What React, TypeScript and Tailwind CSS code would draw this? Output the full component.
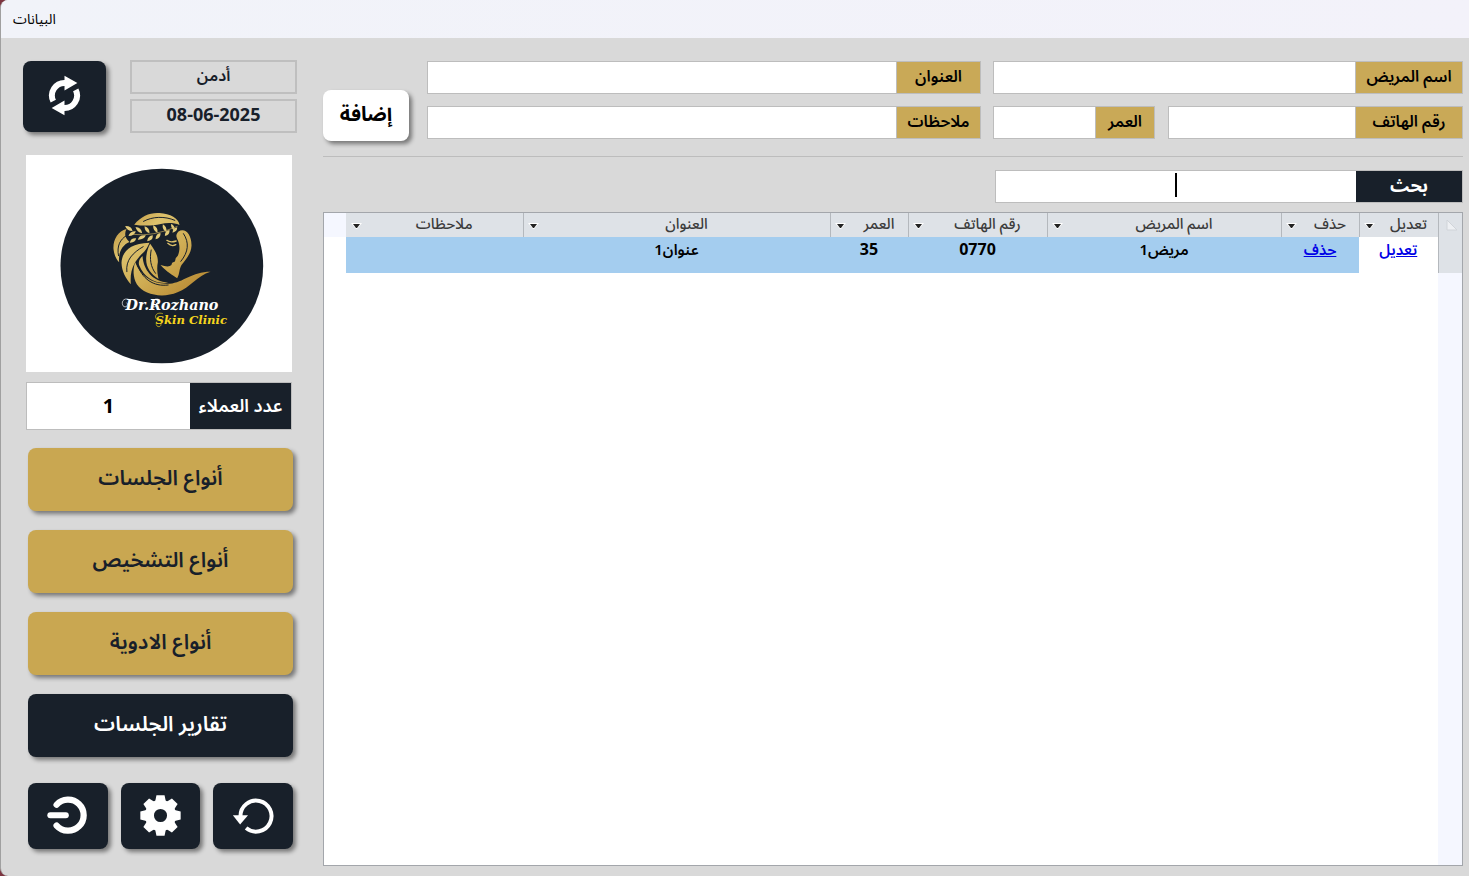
import type { ReactNode } from "react";
import clsx from "clsx";

type Column = {
  id: string;
  label: string;
  width: string;
};

const columns: Column[] = [
  { id: "edit", label: "تعديل", width: "w-[79px]" },
  { id: "delete", label: "حذف", width: "w-[78px]" },
  { id: "name", label: "اسم المريض", width: "w-[234px]" },
  { id: "phone", label: "رقم الهاتف", width: "w-[139px]" },
  { id: "age", label: "العمر", width: "w-[78px]" },
  { id: "address", label: "العنوان", width: "" },
  { id: "notes", label: "ملاحظات", width: "w-[177px]" },
];

const patients = [
  { id: 1, name: "مريض1", phone: "0770", age: "35", address: "عنوان1", notes: "" },
];

const menu = [
  { label: "أنواع الجلسات", dark: false },
  { label: "أنواع التشخيص", dark: false },
  { label: "أنواع الادوية", dark: false },
  { label: "تقارير الجلسات", dark: true },
];

function SyncIcon() {
  return (
    <svg viewBox="140 224 100 128" className="h-[43px] w-[33px]">
      <g fill="none" stroke="#fff" strokeWidth="18">
        <path d="M156 305A38 38 0 0 1 192 250" />
        <path d="M224 271A38 38 0 0 1 188 326" />
      </g>
      <path fill="#fff" d="M190 228L229 250L190 273ZM190 348L151 326L190 303Z" />
    </svg>
  );
}

function ExitIcon() {
  return (
    <svg viewBox="140 585 124 120" className="h-10 w-[41px]">
      <g fill="none" stroke="#fff" strokeLinecap="round">
        <path strokeWidth="19" d="M169 614A47 47 0 1 1 169 677" />
        <path strokeWidth="18" d="M150 646H197" />
      </g>
    </svg>
  );
}

function GearIcon() {
  return (
    <svg viewBox="-61 -61 122 122" className="size-[41px]">
      <circle r="33" fill="none" stroke="#fff" strokeWidth="27" />
      {[0, 45, 90, 135, 180, 225, 270, 315].map((deg) => (
        <path key={deg} fill="#fff" d="M-16 -42L-12 -60H12L16 -42Z" transform={`rotate(${deg})`} />
      ))}
    </svg>
  );
}

function UndoIcon() {
  return (
    <svg viewBox="694 590 126 112" className="h-[37px] w-[42px]">
      <path fill="none" stroke="#fff" strokeWidth="12" d="M736 684A47 47 0 1 0 719 648" />
      <path fill="#fff" d="M696 645H742L718 673Z" />
    </svg>
  );
}

function ClinicLogo() {
  return (
    <svg viewBox="-69 0 795 651" direction="ltr" className="block h-[217px] w-full bg-white" role="img" aria-label="Dr.Rozhano Skin Clinic">
      <defs>
        <linearGradient id="gold" gradientUnits="userSpaceOnUse" x1="200" y1="180" x2="420" y2="420">
          <stop offset="0" stopColor="#b98d38" />
          <stop offset="0.3" stopColor="#dcc16c" />
          <stop offset="0.6" stopColor="#d0ae55" />
          <stop offset="1" stopColor="#b98c35" />
        </linearGradient>
      </defs>
      <ellipse cx="337" cy="333" rx="304" ry="292" fill="#18202a" />
      {/* hair */}
      <g fill="url(#gold)">
        <path d="M254 209C276 182 302 172 330 174C362 176 388 190 390 210C374 203 352 203 334 207C306 213 282 213 254 209Z" />
        <path d="M231 222C205 229 190 254 192 283C194 301 201 314 209 322C206 295 216 271 240 261C226 249 224 236 231 222Z" />
        <path d="M216 323C218 291 239 265 300 263C294 277 288 288 276 298C258 318 240 340 244 388C228 369 217 349 216 323Z" />
        <path d="M386 230C405 216 427 236 426 272C425 296 409 313 396 330C388 344 391 356 383 370C369 360 352 351 333 330C345 333 353 336 361 333C369 331 365 324 371 322C379 321 377 313 379 309L385 302C392 285 391 270 385 256C380 246 378 240 386 230Z" />
        <path d="M302 266C314 284 326 299 325 322C322 338 323 352 327 372C303 356 289 337 290 309C291 292 296 277 302 266Z" />
        <path d="M257 322C274 366 312 390 361 386C402 382 427 350 483 350C443 362 422 397 384 412C339 431 283 420 262 388C250 366 250 342 257 322Z" />
        <path d="M279 303C282 346 310 379 356 383C318 388 284 369 269 331C266 319 271 310 279 303Z" />
      </g>
      <g fill="none" stroke="#18202a" strokeWidth="3" strokeLinecap="round">
        <path d="M282 199C310 184 345 183 376 196" />
        <path d="M207 302C201 272 213 253 229 243" />
        <path d="M232 350C228 315 250 293 281 275" />
        <path d="M262 325C277 372 312 396 356 390" />
        <path d="M305 285C300 312 303 335 318 355" />
        <path d="M402 236C420 263 417 291 394 319" />
      </g>
      {/* olive wreath */}
      <g fill="#e3cb79">
        <path d="M227 213Q246 212 249 228Q232 228 227 213ZM237 243Q241 228 259 229Q255 243 237 243ZM241 263Q244 248 260 250Q257 264 241 263Z" />
        <path d="M258 216Q276 217 278 235Q262 232 258 216ZM265 254Q270 238 289 241Q283 255 265 254ZM285 214Q301 219 300 235Q285 230 285 214Z" />
        <path d="M293 259Q295 242 310 241Q311 257 293 259ZM311 211Q327 218 324 234Q310 227 311 211ZM318 253Q319 235 333 234Q335 249 318 253Z" />
        <path d="M340 208Q354 216 350 231Q337 223 340 208ZM346 243Q346 227 360 225Q362 240 346 243ZM365 206Q378 212 374 226Q363 219 365 206ZM369 233Q370 220 383 217Q384 230 369 233Z" />
      </g>
      <path d="M250 238Q310 246 384 214" fill="none" stroke="#cdb061" strokeWidth="2" />
      <path d="M352 256Q363 264 380 258M355 265Q366 276 379 269" fill="none" stroke="#dcc06a" strokeWidth="4" strokeLinecap="round" />
      <g fill="none" strokeWidth="2">
        <path stroke="#fff" d="M240 434C221 426 213 443 222 454C231 460 238 448 231 443M330 434C311 426 302 446 310 455C320 459 326 447 318 442" />
        <path stroke="#f5d51d" d="M340 476C318 469 312 488 325 495M320 508C323 520 337 515 334 506" />
      </g>
      <text x="228" y="466" fill="#fff" fontSize="43" className="font-['DejaVu_Serif',serif] font-bold italic">
        Dr.Rozhano
      </text>
      <text x="318" y="506" fill="#f5d51d" fontSize="35" className="font-['DejaVu_Serif',serif] font-bold italic">
        Skin Clinic
      </text>
    </svg>
  );
}

function IconButton({ label, className, children }: { label: string; className?: string; children: ReactNode }) {
  return (
    <button
      type="button"
      aria-label={label}
      className={clsx("flex items-center justify-center rounded-lg bg-[#18202a] pb-0.5 shadow-[3px_3px_4px_rgba(0,0,0,0.45)]", className)}
    >
      {children}
    </button>
  );
}

function Field({ id, label, labelWidth, className }: { id: string; label: string; labelWidth: string; className?: string }) {
  return (
    <div className={clsx("flex h-[33px] border border-[#bdbdbd] bg-white", className)}>
      <label
        htmlFor={id}
        className={clsx("flex shrink-0 items-center justify-center border-l border-[#bdbdbd] bg-[#c9a957] pb-1 text-base font-semibold leading-none", labelWidth)}
      >
        {label}
      </label>
      <input id={id} type="text" className="w-full min-w-0 px-2 text-center text-base outline-none" />
    </div>
  );
}

function FilterArrow({ label }: { label: string }) {
  return (
    <button type="button" aria-label={label} className="flex w-5 shrink-0 items-center justify-center pt-0.5">
      <svg viewBox="0 0 11 6" className="h-[6px] w-[11px]">
        <path fill="#fff" d="M0 0H11L6 6H5Z" />
        <path fill="#222" d="M2 1H9L6 5H5Z" />
      </svg>
    </button>
  );
}

function Sidebar() {
  return (
    <aside className="flex w-[274px] shrink-0 flex-col pt-[22px]" dir="rtl">
      <div className="flex items-start justify-between">
        <div className="w-[167px] space-y-[5px]">
          <div className="flex h-[34px] items-center justify-center border-2 border-[#bfbfbf] pb-1 text-base font-semibold leading-none text-[#18202a]">أدمن</div>
          <div className="flex h-[34px] items-center justify-center border-2 border-[#bfbfbf] pb-1 text-lg font-bold leading-none text-[#18202a]" dir="ltr">
            08-06-2025
          </div>
        </div>
        <IconButton label="تحديث" className="mt-px h-[71px] w-[83px]">
          <SyncIcon />
        </IconButton>
      </div>

      <div className="mr-[5px] mt-[22px] w-[266px]">
        <ClinicLogo />
        <div className="mt-[10px] flex h-12 border border-[#bdbdbd] bg-white">
          <label htmlFor="clients" className="flex w-[101px] shrink-0 items-center justify-center bg-[#18202a] pb-0.5 text-lg font-semibold text-white">
            عدد العملاء
          </label>
          <input id="clients" readOnly value="1" className="w-full min-w-0 text-center text-xl font-bold outline-none" />
        </div>
      </div>

      <div className="mr-1 w-[265px]">
        <div className="mt-[18px] space-y-[19px]">
          {menu.map((item) => (
            <button
              key={item.label}
              type="button"
              className={clsx(
                "flex h-[63px] w-full items-center justify-center rounded-lg pb-1 text-[21px] font-semibold shadow-[3px_3px_4px_rgba(0,0,0,0.45)]",
                item.dark ? "bg-[#18202a] text-white" : "bg-[#c9a751] text-[#18202a]"
              )}
            >
              {item.label}
            </button>
          ))}
        </div>

        <div className="mt-[26px] grid grid-cols-3 gap-[13px]">
          <IconButton label="رجوع" className="h-[66px]">
            <UndoIcon />
          </IconButton>
          <IconButton label="الإعدادات" className="h-[66px]">
            <GearIcon />
          </IconButton>
          <IconButton label="خروج" className="h-[66px]">
            <ExitIcon />
          </IconButton>
        </div>
      </div>
    </aside>
  );
}

function PatientForm() {
  return (
    <form className="flex items-start border-b border-[#bdbdbd] pb-[15px]">
      <div className="grid flex-1 grid-cols-[470fr_554fr] gap-x-3 gap-y-3">
        <Field id="name" label="اسم المريض" labelWidth="w-[107px]" />
        <Field id="address" label="العنوان" labelWidth="w-[84px]" />
        <div className="flex gap-[13px]">
          <Field id="phone" label="رقم الهاتف" labelWidth="w-[107px]" className="flex-1" />
          <Field id="age" label="العمر" labelWidth="w-[59px]" className="w-[162px]" />
        </div>
        <Field id="notes" label="ملاحظات" labelWidth="w-[84px]" />
      </div>
      <button
        type="button"
        className="mr-[18px] mt-[29px] flex h-[51px] w-[86px] items-center justify-center rounded-lg bg-white pb-1 text-xl font-bold shadow-[3px_3px_4px_rgba(0,0,0,0.45)]"
      >
        إضافة
      </button>
    </form>
  );
}

function SearchBar() {
  return (
    <div className="mt-[13px] flex h-[33px] w-[468px] border border-[#bdbdbd] bg-white">
      <label htmlFor="search" className="flex w-[106px] shrink-0 items-center justify-center bg-[#18202a] pb-1 text-lg font-bold leading-none text-white">
        بحث
      </label>
      <div className="relative flex-1">
        <input id="search" type="text" className="h-full w-full px-2 text-center text-lg outline-none" />
        <span className="absolute left-1/2 top-0.5 h-6 w-0.5 -translate-x-1/2 bg-black" />
      </div>
    </div>
  );
}

function PatientTable() {
  return (
    <div className="mt-[9px] flex flex-1 flex-col border border-[#a3a6ab] bg-white">
      <table className="w-full table-fixed border-collapse">
        <thead>
          <tr className="h-6 bg-[#dee2e7] text-[15px] text-[#3b3b3b]">
            <th className="w-6 border-l border-[#b4b8bd] p-0">
              <svg viewBox="0 0 12 12" className="mr-1 size-3">
                <path fill="#eef0f3" stroke="#d0d4d9" d="M1 1V11H11Z" />
              </svg>
            </th>
            {columns.map((col) => (
              <th key={col.id} className={clsx("border-[#b4b8bd] p-0 font-medium", col.id !== "notes" && "border-l", col.width)}>
                <div className="flex h-6 items-center">
                  <span className="flex-1 pb-1 text-center leading-5">{col.label}</span>
                  <FilterArrow label={col.label} />
                </div>
              </th>
            ))}
            <th className="w-[22px] bg-[#f5f7ff] p-0" />
          </tr>
        </thead>
        <tbody>
          {patients.map((p) => (
            <tr key={p.id} className="h-9 text-[15px] font-semibold leading-6 *:p-0 *:text-center *:align-top">
              <td className="border-l border-[#b4b8bd] bg-[#dee2e7]" />
              <td>
                <a href="#edit" className="text-[#0000e6] underline">تعديل</a>
              </td>
              <td className="bg-[#a4cdef]">
                <a href="#delete" className="text-[#0000e6] underline">حذف</a>
              </td>
              <td className="bg-[#a4cdef]">{p.name}</td>
              <td className="bg-[#a4cdef] text-base font-bold">{p.phone}</td>
              <td className="bg-[#a4cdef] text-base font-bold">{p.age}</td>
              <td className="bg-[#a4cdef]">{p.address}</td>
              <td className="bg-[#a4cdef]">{p.notes}</td>
              <td />
            </tr>
          ))}
        </tbody>
      </table>
      <div className="w-6 flex-1 bg-[#f5f7ff]" />
    </div>
  );
}

export default function App() {
  return (
    <div className="min-h-screen bg-[#7d3540] font-['Noto_Sans','Noto_Sans_Arabic',sans-serif] text-black">
      <div className="flex min-h-screen flex-col overflow-hidden rounded-l-lg border-l border-[#a0a0a0] bg-[#d9d9d9]">
        <header className="flex h-[38px] items-center bg-gradient-to-r from-[#f1f3f9] to-[#f3f2fa] px-3 text-sm">البيانات</header>
        <div className="flex flex-1 pb-[10px] pl-[22px] pr-[6px]">
          <Sidebar />
          <main className="ml-[26px] flex min-w-0 flex-1 flex-col pt-[23px]" dir="rtl">
            <PatientForm />
            <SearchBar />
            <PatientTable />
          </main>
        </div>
      </div>
    </div>
  );
}
